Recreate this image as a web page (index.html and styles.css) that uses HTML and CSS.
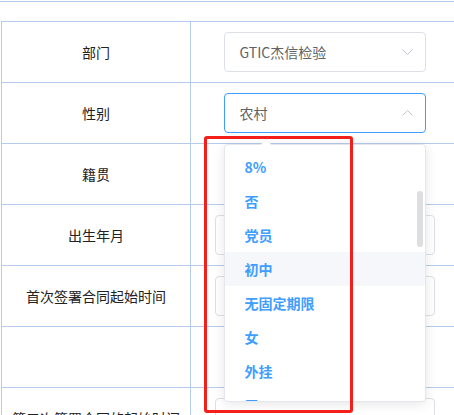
FILE: index.html
```html
<!DOCTYPE html>
<html lang="zh-CN">
<head>
    <meta charset="UTF-8">
    <meta name="viewport" content="width=device-width, initial-scale=1.0">
    <title>员工信息</title>
    <link rel="stylesheet" href="styles.css">
</head>
<body>
    <div class="topbar"></div>

    <div class="form-table">
        <div class="row">
            <div class="label">部门</div>
            <div class="value">
                <div class="select">
                    <span class="select-text">GTIC杰信检验</span>
                    <svg class="arrow" width="11" height="6" viewBox="0 0 11 6"><polyline points="0.5,0.5 5.5,5.5 10.5,0.5" fill="none" stroke="#c0c4cc" stroke-width="1"/></svg>
                </div>
            </div>
        </div>
        <div class="row">
            <div class="label">性别</div>
            <div class="value">
                <div class="select is-open">
                    <span class="select-text">农村</span>
                    <svg class="arrow" width="11" height="6" viewBox="0 0 11 6"><polyline points="0.5,5.5 5.5,0.5 10.5,5.5" fill="none" stroke="#c0c4cc" stroke-width="1"/></svg>

                    <div class="dropdown">
                        <span class="popper-arrow"></span>
                        <ul class="options">
                            <li>8%</li>
                            <li>否</li>
                            <li>党员</li>
                            <li class="hover">初中</li>
                            <li>无固定期限</li>
                            <li>女</li>
                            <li>外挂</li>
                            <li>无</li>
                        </ul>
                        <span class="scroll-thumb"></span>
                    </div>
                </div>
            </div>
        </div>
        <div class="row">
            <div class="label">籍贯</div>
            <div class="value">
                <div class="select"></div>
            </div>
        </div>
        <div class="row">
            <div class="label">出生年月</div>
            <div class="value"><div class="date-box"></div></div>
        </div>
        <div class="row">
            <div class="label">首次签署合同起始时间</div>
            <div class="value"><div class="date-box"></div></div>
        </div>
        <div class="row">
            <div class="label"></div>
            <div class="value"></div>
        </div>
        <div class="row">
            <div class="label">第二次签署合同的起始时间</div>
            <div class="value"><div class="date-box"></div></div>
        </div>
    </div>

    <!-- red annotation frame over the option list -->
    <div class="mark"></div>
</body>
</html>
```

FILE: styles.css
```css
body {
    margin: 0;
    height: 415px;
    overflow: hidden;
    background: #fff;
    font-family: "Noto Sans CJK SC", "Noto Sans", sans-serif;
    font-size: 14px;
    color: #303133;
}
.topbar {
    margin-top: 1px;
    height: 19px;
    border-top: 1px solid #b4cbeb;
}
.form-table {
    margin-left: 1px;
    width: 460px;
}
.row {
    display: flex;
    height: 60px;
    border-top: 1px solid #b4cbeb;
}
.label {
    width: 188px;
    border-left: 1px solid #b4cbeb;
    display: flex;
    align-items: center;
    justify-content: center;
    white-space: nowrap;
    line-height: 20px;
    color: #222;
}
.value {
    width: 267px;
    border-left: 1px solid #b4cbeb;
    display: flex;
    align-items: center;
    justify-content: center;
}
.select {
    position: relative;
    box-sizing: border-box;
    width: 202px;
    height: 40px;
    border: 1px solid #dcdfe6;
    border-radius: 4px;
    padding: 0 15px;
    display: flex;
    align-items: center;
    justify-content: space-between;
    background: #fff;
}
.select.is-open {
    border-color: #409eff;
}
.select-text {
    color: #606266;
    line-height: 20px;
}
.arrow {
    margin-right: -3px;
}
.date-box {
    box-sizing: border-box;
    width: 220px;
    height: 40px;
    border: 1px solid #dcdfe6;
    border-radius: 4px;
}

/* option list of the open select */
.dropdown {
    position: absolute;
    z-index: 10;
    left: -1px;
    top: calc(100% + 12px);
    box-sizing: border-box;
    width: 202px;
    height: 258px;
    border: 1px solid #e4e7ed;
    border-radius: 4px;
    background: #fff;
    box-shadow: 0 2px 12px 0 rgba(0, 0, 0, 0.1);
}
.popper-arrow {
    position: absolute;
    top: -6px;
    left: 35px;
    border: 6px solid transparent;
    border-top-width: 0;
    border-bottom-color: #ebeef5;
}
.popper-arrow::after {
    content: "";
    position: absolute;
    top: 1px;
    left: -6px;
    border: 6px solid transparent;
    border-top-width: 0;
    border-bottom-color: #fff;
}
.options {
    list-style: none;
    margin: 0;
    padding: 5px 0;
    height: 100%;
    box-sizing: border-box;
    overflow: hidden;
}
.options li {
    height: 34px;
    line-height: 34px;
    padding: 0 20px;
    font-weight: bold;
    color: #409eff;
}
.options li.hover {
    background: #f5f7fa;
}
.scroll-thumb {
    position: absolute;
    right: 2px;
    top: 46px;
    width: 6px;
    height: 56px;
    border-radius: 3px;
    background: rgba(144, 147, 153, 0.3);
}

.mark {
    position: absolute;
    z-index: 20;
    left: 204px;
    top: 136px;
    width: 143px;
    height: 271px;
    border: 3px solid #f31f1a;
    border-radius: 3px;
}
```
